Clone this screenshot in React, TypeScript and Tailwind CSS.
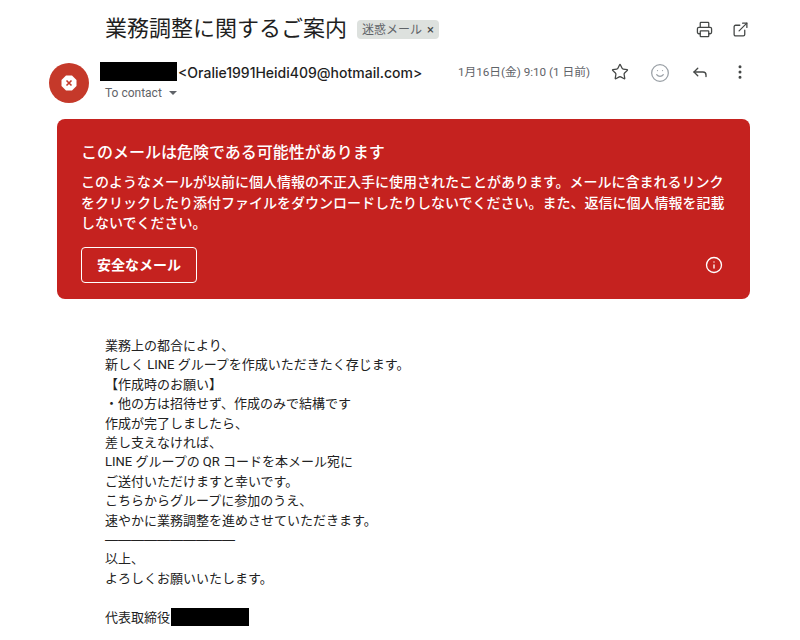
import React from "react";
import { Star, Smile, Reply, MoreVertical, Printer, ExternalLink, Info } from "lucide-react";

const FONT = "font-['Roboto','Noto_Sans_CJK_JP',sans-serif]";

const body = [
  "業務上の都合により、",
  "新しく LINE グループを作成いただきたく存じます。",
  "【作成時のお願い】",
  "・他の方は招待せず、作成のみで結構です",
  "作成が完了しましたら、",
  "差し支えなければ、",
  "LINE グループの QR コードを本メール宛に",
  "ご送付いただけますと幸いです。",
  "こちらからグループに参加のうえ、",
  "速やかに業務調整を進めさせていただきます。",
];

export default function App() {
  return (
    <div className={`${FONT} w-[800px] h-[640px] overflow-hidden bg-white text-[#202124]`}>
      <div className="flex items-center h-[58px] pl-[105px] pr-[51px]">
        <h1 className="text-[22px] leading-[28px] font-normal text-[#1f1f1f]">業務調整に関するご案内</h1>
        <span className="ml-[10px] mt-[1px] h-[19px] px-[5px] flex items-center gap-[5px] rounded-[4px] bg-[#dde1de] text-[12px] text-[#5f6368]">
          迷惑メール<span className="text-[13px] leading-[13px] text-[#444746]">×</span>
        </span>
        <div className="ml-auto flex items-center gap-[19px] text-[#444746]">
          <Printer size={17} strokeWidth={1.8} />
          <ExternalLink size={17} strokeWidth={1.8} />
        </div>
      </div>

      <div className="flex pl-[49px] pr-[50px] h-[61px]">
        <div className="w-[40px] h-[40px] mt-[5px] rounded-full bg-[#c5392a] flex items-center justify-center">
          <svg width="16" height="16" viewBox="0 0 16 16">
            <polygon points="5,0.5 11,0.5 15.5,5 15.5,11 11,15.5 5,15.5 0.5,11 0.5,5" fill="#fff" />
            <path d="M5.5 5.5l5 5M10.5 5.5l-5 5" stroke="#c5392a" strokeWidth="1.6" />
          </svg>
        </div>
        <div className="ml-[11px] flex flex-col">
          <div className="flex items-center h-[19px] mt-[4px]">
            <div className="w-[77px] h-[19px] bg-black" />
            <span className="ml-[1px] mt-[2px] font-['Inter','Noto_Sans_CJK_JP',sans-serif] text-[14px] font-medium text-[#1f1f1f]">&lt;Oralie1991Heidi409@hotmail.com&gt;</span>
          </div>
          <div className="flex items-center mt-[3px] ml-[5px] text-[12px] text-[#5f6368]">
            To contact
            <svg className="ml-[7px]" width="8" height="4" viewBox="0 0 8 4"><path d="M0 0h8L4 4z" fill="#5f6368" /></svg>
          </div>
        </div>
        <div className="ml-auto flex items-start pt-[5px]">
          <span className="text-[11.7px] leading-[16px] mt-[1px] text-[#5f6368]">1月16日(金) 9:10 (1 日前)</span>
          <Star className="ml-[21px] text-[#444746]" size={18} strokeWidth={1.7} />
          <Smile className="ml-[21px] text-[#9aa0a6]" size={20} strokeWidth={1.5} />
          <Reply className="ml-[21px] text-[#444746]" size={18} strokeWidth={1.8} />
          <MoreVertical className="ml-[22px] mr-[1px] text-[#444746]" size={18} strokeWidth={2} />
        </div>
      </div>

      <div className="mx-[57px] w-[693px] h-[180px] rounded-[8px] bg-[#c5221f] text-white pt-[23px] px-[24px]">
        <div className="text-[16px] leading-[22px] font-medium">このメールは危険である可能性があります</div>
        <p className="mt-[8px] text-[14px] leading-[20.5px] font-medium">
          このようなメールが以前に個人情報の不正入手に使用されたことがあります。メールに含まれるリンクをクリックしたり添付ファイルをダウンロードしたりしないでください。また、返信に個人情報を記載しないでください。
        </p>
        <div className="mt-[13px] flex items-center justify-between">
          <button className="w-[116px] h-[36px] pt-[1px] rounded-[4px] border border-white text-[14px] font-bold">安全なメール</button>
          <Info className="mr-[3px]" size={18} strokeWidth={1.8} />
        </div>
      </div>

      <div className="mt-[37px] ml-[105px] text-[13px] leading-[19.4px] text-[#222222]">
        {body.map((l) => (
          <div key={l}>{l}</div>
        ))}
        <div className="font-['Liberation_Sans',sans-serif]">——————————</div>
        <div>以上、</div>
        <div>よろしくお願いいたします。</div>
        <div className="h-[19.4px]" />
        <div className="flex items-center">
          代表取締役<div className="ml-[1px] w-[78px] h-[18px] bg-black" />
        </div>
      </div>
    </div>
  );
}
